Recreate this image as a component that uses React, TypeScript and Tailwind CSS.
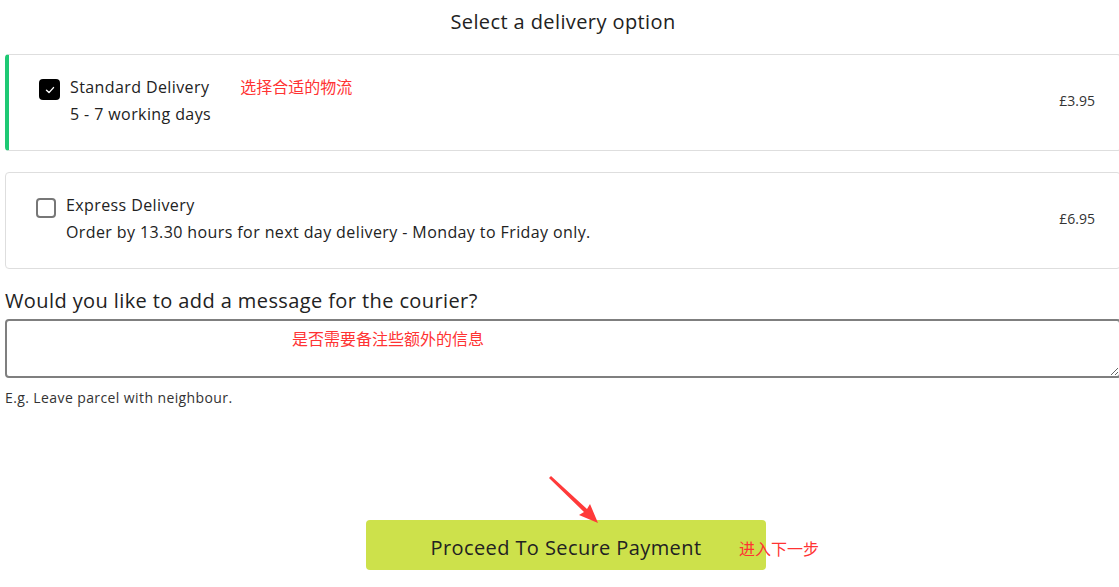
import { useState } from 'react';

const font = { fontFamily: '"Open Sans", "Noto Sans CJK SC", sans-serif' };

interface Option {
  id: string;
  title: string;
  desc: string;
  price: string;
  note?: string;
}

const options: Option[] = [
  { id: 'standard', title: 'Standard Delivery', desc: '5 - 7 working days', price: '£3.95', note: '选择合适的物流' },
  { id: 'express', title: 'Express Delivery', desc: 'Order by 13.30 hours for next day delivery - Monday to Friday only.', price: '£6.95' },
];

function CheckIcon() {
  return (
    <svg width="12" height="12" viewBox="0 0 12 12" fill="none">
      <path d="M2.5 6.3 L5 8.6 L9.5 3.6" stroke="white" strokeWidth="1.4" strokeLinecap="round" strokeLinejoin="round" />
    </svg>
  );
}

export default function App() {
  const [selected, setSelected] = useState('standard');

  return (
    <div className="w-[1119px] h-[587px] overflow-hidden bg-white text-[#222] tracking-[0.025em]" style={font}>
      <div className="relative ml-[5px] w-[1116px]">
        <h2 className="pt-2 text-center text-[20px] leading-7 text-[#222]">Select a delivery option</h2>

        <div className="mt-[18px] flex flex-col gap-[21px]">
          {options.map((o) => {
            const active = selected === o.id;
            return (
              <div
                key={o.id}
                onClick={() => setSelected(o.id)}
                className={
                  active
                    ? 'flex items-center justify-between rounded-[4px] border border-l-4 border-[#dedede] border-l-[#1ec974] pl-[30px] pr-[25px] pt-5 pb-6'
                    : 'flex items-center justify-between rounded-[4px] border border-[#dedede] pl-[30px] pr-[25px] pt-5 pb-6'
                }
              >
                <div className="flex items-start">
                  {active ? (
                    <span className="mt-1 flex h-[21px] w-[21px] items-center justify-center rounded-[4px] bg-black">
                      <CheckIcon />
                    </span>
                  ) : (
                    <span className="mt-[5px] h-5 w-5 rounded-[4px] border-2 border-[#777]" />
                  )}
                  <div className="ml-[10px]">
                    <div className="flex items-center text-[16px] leading-6">
                      <span>{o.title}</span>
                      {o.note && <span className="ml-[31px] tracking-normal text-[#ff3333]">{o.note}</span>}
                    </div>
                    <div className="mt-[3px] text-[16px] leading-6">{o.desc}</div>
                  </div>
                </div>
                <span className="text-[14px] tracking-normal text-[#333]">{o.price}</span>
              </div>
            );
          })}
        </div>

        <label className="mt-[18px] block text-[20px] leading-7 text-[#222]">Would you like to add a message for the courier?</label>
        <div className="relative mt-1">
          <textarea className="block h-[59px] w-full rounded-[4px] border-2 border-[#7f7f7f] p-2 outline-none" />
          <span className="pointer-events-none absolute left-[287px] top-[10px] text-[16px] leading-5 tracking-normal text-[#ff3333]">是否需要备注些额外的信息</span>
        </div>
        <p className="mt-[10px] text-[14px] leading-5 text-[#333]">E.g. Leave parcel with neighbour.</p>

        <div className="relative mt-[112px] ml-[361px] w-[400px]">
          <button className="block h-[50px] w-[400px] rounded-[4px] bg-[#cde14b] pt-[5px] text-[20px] text-[#222]">Proceed To Secure Payment</button>
          <span className="absolute left-[373px] top-[19px] whitespace-nowrap text-[16px] leading-5 tracking-normal text-[#ff3333]">进入下一步</span>
          <svg className="absolute left-[180px] top-[-44px]" width="60" height="50" viewBox="0 0 60 50">
            <polygon points="3,2 5,0 41,33 44,28 52,47 33,39 38,36" fill="#ff3a3a" />
          </svg>
        </div>
      </div>
    </div>
  );
}
